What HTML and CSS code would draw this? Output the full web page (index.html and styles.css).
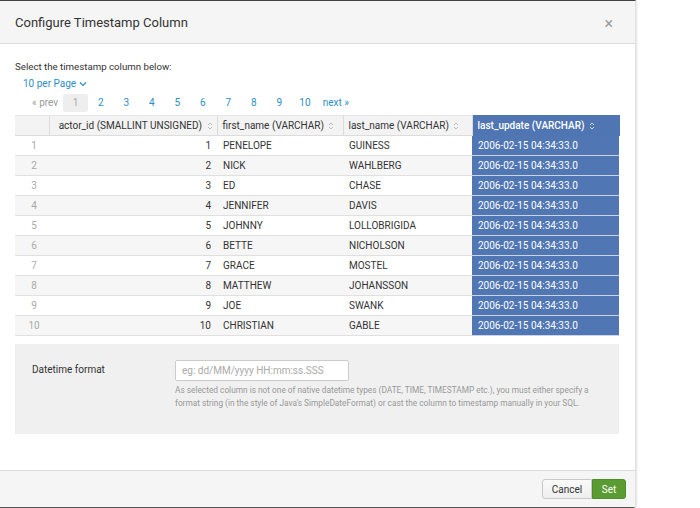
FILE: index.html
```html
<!DOCTYPE html>
<html>
<head>
<meta charset="utf-8">
<link rel="stylesheet" href="styles.css">
</head>
<body>
<div class="modal">
  <div class="modal-header">
    <h1 class="title">Configure Timestamp Column</h1>
    <span class="close">&times;</span>
  </div>
  <div class="modal-body">
    <p class="intro">Select the timestamp column below:</p>
    <div class="per-page">10 per Page <svg class="chev" width="8" height="6" viewBox="0 0 8 6"><path d="M1 1.5 L4 4.5 L7 1.5" fill="none" stroke="#2b8fc6" stroke-width="1.2"/></svg></div>
    <div class="pager">
      <span class="pg prev">&laquo; prev</span>
      <span class="pg active">1</span>
      <span class="pg">2</span>
      <span class="pg">3</span>
      <span class="pg">4</span>
      <span class="pg">5</span>
      <span class="pg">6</span>
      <span class="pg">7</span>
      <span class="pg">8</span>
      <span class="pg">9</span>
      <span class="pg">10</span>
      <span class="pg next">next &raquo;</span>
    </div>
    <table class="grid">
      <colgroup>
        <col class="c-idx"><col class="c-id"><col class="c-first"><col class="c-last"><col class="c-upd">
      </colgroup>
      <thead>
        <tr>
          <th class="idx"></th>
          <th class="num">actor_id (SMALLINT UNSIGNED) <svg class="sort" width="6" height="8" viewBox="0 0 6 8"><path d="M1 3 L3 1 L5 3 M1 5 L3 7 L5 5" fill="none" stroke="#b5b5b5" stroke-width="0.9"/></svg></th>
          <th>first_name (VARCHAR) <svg class="sort" width="6" height="8" viewBox="0 0 6 8"><path d="M1 3 L3 1 L5 3 M1 5 L3 7 L5 5" fill="none" stroke="#b5b5b5" stroke-width="0.9"/></svg></th>
          <th>last_name (VARCHAR) <svg class="sort" width="6" height="8" viewBox="0 0 6 8"><path d="M1 3 L3 1 L5 3 M1 5 L3 7 L5 5" fill="none" stroke="#b5b5b5" stroke-width="0.9"/></svg></th>
          <th class="sel">last_update (VARCHAR) <svg class="sort" width="6" height="8" viewBox="0 0 6 8"><path d="M1 3 L3 1 L5 3 M1 5 L3 7 L5 5" fill="none" stroke="#dfe7f3" stroke-width="0.9"/></svg></th>
        </tr>
      </thead>
      <tbody>
        <tr><td class="idx">1</td><td class="num">1</td><td>PENELOPE</td><td>GUINESS</td><td class="sel">2006-02-15 04:34:33.0</td></tr>
        <tr><td class="idx">2</td><td class="num">2</td><td>NICK</td><td>WAHLBERG</td><td class="sel">2006-02-15 04:34:33.0</td></tr>
        <tr><td class="idx">3</td><td class="num">3</td><td>ED</td><td>CHASE</td><td class="sel">2006-02-15 04:34:33.0</td></tr>
        <tr><td class="idx">4</td><td class="num">4</td><td>JENNIFER</td><td>DAVIS</td><td class="sel">2006-02-15 04:34:33.0</td></tr>
        <tr><td class="idx">5</td><td class="num">5</td><td>JOHNNY</td><td>LOLLOBRIGIDA</td><td class="sel">2006-02-15 04:34:33.0</td></tr>
        <tr><td class="idx">6</td><td class="num">6</td><td>BETTE</td><td>NICHOLSON</td><td class="sel">2006-02-15 04:34:33.0</td></tr>
        <tr><td class="idx">7</td><td class="num">7</td><td>GRACE</td><td>MOSTEL</td><td class="sel">2006-02-15 04:34:33.0</td></tr>
        <tr><td class="idx">8</td><td class="num">8</td><td>MATTHEW</td><td>JOHANSSON</td><td class="sel">2006-02-15 04:34:33.0</td></tr>
        <tr><td class="idx">9</td><td class="num">9</td><td>JOE</td><td>SWANK</td><td class="sel">2006-02-15 04:34:33.0</td></tr>
        <tr><td class="idx">10</td><td class="num">10</td><td>CHRISTIAN</td><td>GABLE</td><td class="sel">2006-02-15 04:34:33.0</td></tr>
      </tbody>
    </table>
    <div class="format-panel">
      <label class="fmt-label">Datetime format</label>
      <div class="fmt-field">
        <input class="fmt-input" type="text" placeholder="eg: dd/MM/yyyy HH:mm:ss.SSS">
        <p class="help">As selected column is not one of native datetime types (DATE, TIME, TIMESTAMP etc.), you must either specify a format string (in the style of Java's SimpleDateFormat) or cast the column to timestamp manually in your SQL.</p>
      </div>
    </div>
  </div>
  <div class="modal-footer">
    <button class="btn btn-cancel">Cancel</button>
    <button class="btn btn-set">Set</button>
  </div>
</div>
</body>
</html>
```

FILE: styles.css
```css
* { box-sizing: border-box; }
html, body { margin: 0; padding: 0; background: #fff; }
body {
  font-family: Roboto, "Liberation Sans", sans-serif;
  color: #333;
  width: 700px;
  height: 508px;
  overflow: hidden;
}
.modal {
  width: 636px;
  height: 508px;
  background: #fff;
  border-top: 1px solid #3d4144;
  border-bottom: 1px solid #555;
  border-right: 1px solid #e2e2e2;
  border-bottom-right-radius: 3px;
  display: flex;
  flex-direction: column;
  box-shadow: 1px 0 2px rgba(0,0,0,0.12);
}
.modal-header {
  height: 43px;
  background: #f5f5f5;
  border-bottom: 1px solid #dcdcdc;
  display: flex;
  align-items: center;
  justify-content: space-between;
  padding: 0 22px 0 15px;
}
.title {
  margin: 0;
  font-size: 13px;
  font-weight: 400;
  color: #333;
  padding-top: 1px;
}
.close {
  font-size: 16px;
  color: #999;
  line-height: 1;
  padding-top: 3px;
}
.modal-body {
  flex: 1;
  padding: 16px 16px 0 15px;
}
.intro {
  margin: 0;
  font-size: 9.7px;
  line-height: 14px;
  color: #333;
}
.per-page {
  margin: 3px 0 0 8px;
  font-size: 10px;
  line-height: 14px;
  color: #2b8fc6;
  display: flex;
  align-items: center;
  gap: 3px;
}
.pager {
  display: flex;
  align-items: center;
  margin: 3px 0 3px 14px;
  height: 18px;
}
.pg {
  font-size: 10px;
  color: #2b8fc6;
  width: 25.5px;
  text-align: center;
  line-height: 18px;
}
.pg.prev { color: #999; width: auto; margin-right: 5px; margin-left: 3px; }
.pg.active { background: #eee; color: #aaa; width: 25px; border-radius: 2px; }
.pg.next { width: auto; margin-left: 5px; }
.grid {
  border-collapse: collapse;
  table-layout: fixed;
  width: 604px;
  font-size: 10px;
}
.c-idx { width: 34px; }
.c-id { width: 168px; }
.c-first { width: 126px; }
.c-last { width: 129px; }
.c-upd { width: 147px; }
.grid th {
  height: 20px;
  background: #f3f3f3;
  border: 1px solid #dcdcdc;
  border-top: 1px solid #e6e6e6;
  font-weight: 400;
  text-align: left;
  padding: 0 5px;
  white-space: nowrap;
  color: #333;
}
.grid td {
  height: 20px;
  border-bottom: 1px solid #e0e0e0;
  padding: 0 6px;
  white-space: nowrap;
  color: #333;
}
.grid tbody tr:nth-child(even) td { background: #f6f6f6; }
.grid .idx { text-align: center; padding-left: 10px; color: #aaa; }
.grid th.idx { border-left: none; }
.grid .num { text-align: right; }
.grid th.num { padding-right: 4px; }
.grid th.sel {
  background: #4f76b2;
  color: #fff;
  border: 1px solid #4f76b2;
  font-weight: 500;
}
.grid tbody tr td.sel {
  background: #5077b4;
  color: #fff;
  border-bottom: 1px solid #c8d4e8;
}
.sort { margin-left: 2px; vertical-align: -1px; }
.format-panel {
  margin-top: 8px;
  background: #f0f0f0;
  height: 90px;
  display: flex;
  padding: 16px 0 0 17px;
}
.fmt-label {
  width: 143px;
  font-size: 10px;
  line-height: 20px;
  color: #333;
}
.fmt-field { width: 425px; }
.fmt-input {
  width: 174px;
  height: 21px;
  border: 1px solid #ccc;
  background: #fff;
  font-family: inherit;
  font-size: 10px;
  padding: 0 6px;
  border-radius: 2px;
  display: block;
}
.fmt-input::placeholder { color: #aaa; }
.help {
  margin: 3px 0 0 0;
  font-size: 8.3px;
  line-height: 13px;
  color: #999;
}
.modal-footer {
  height: 37px;
  background: #f5f5f5;
  border-top: 1px solid #dcdcdc;
  display: flex;
  align-items: center;
  justify-content: flex-end;
  padding: 0 9px 0 0;
}
.btn {
  font-family: inherit;
  font-size: 10px;
  height: 20px;
  padding: 0;
  border-radius: 3px;
  cursor: pointer;
}
.btn-cancel {
  width: 50px;
  background: linear-gradient(#fafafa, #eee);
  border: 1px solid #c8c8c8;
  color: #333;
  border-top-right-radius: 0;
  border-bottom-right-radius: 0;
}
.btn-set {
  width: 34px;
  background: #5a9c31;
  border: 1px solid #4f8c2a;
  color: #fff;
  border-top-left-radius: 0;
  border-bottom-left-radius: 0;
}
```
